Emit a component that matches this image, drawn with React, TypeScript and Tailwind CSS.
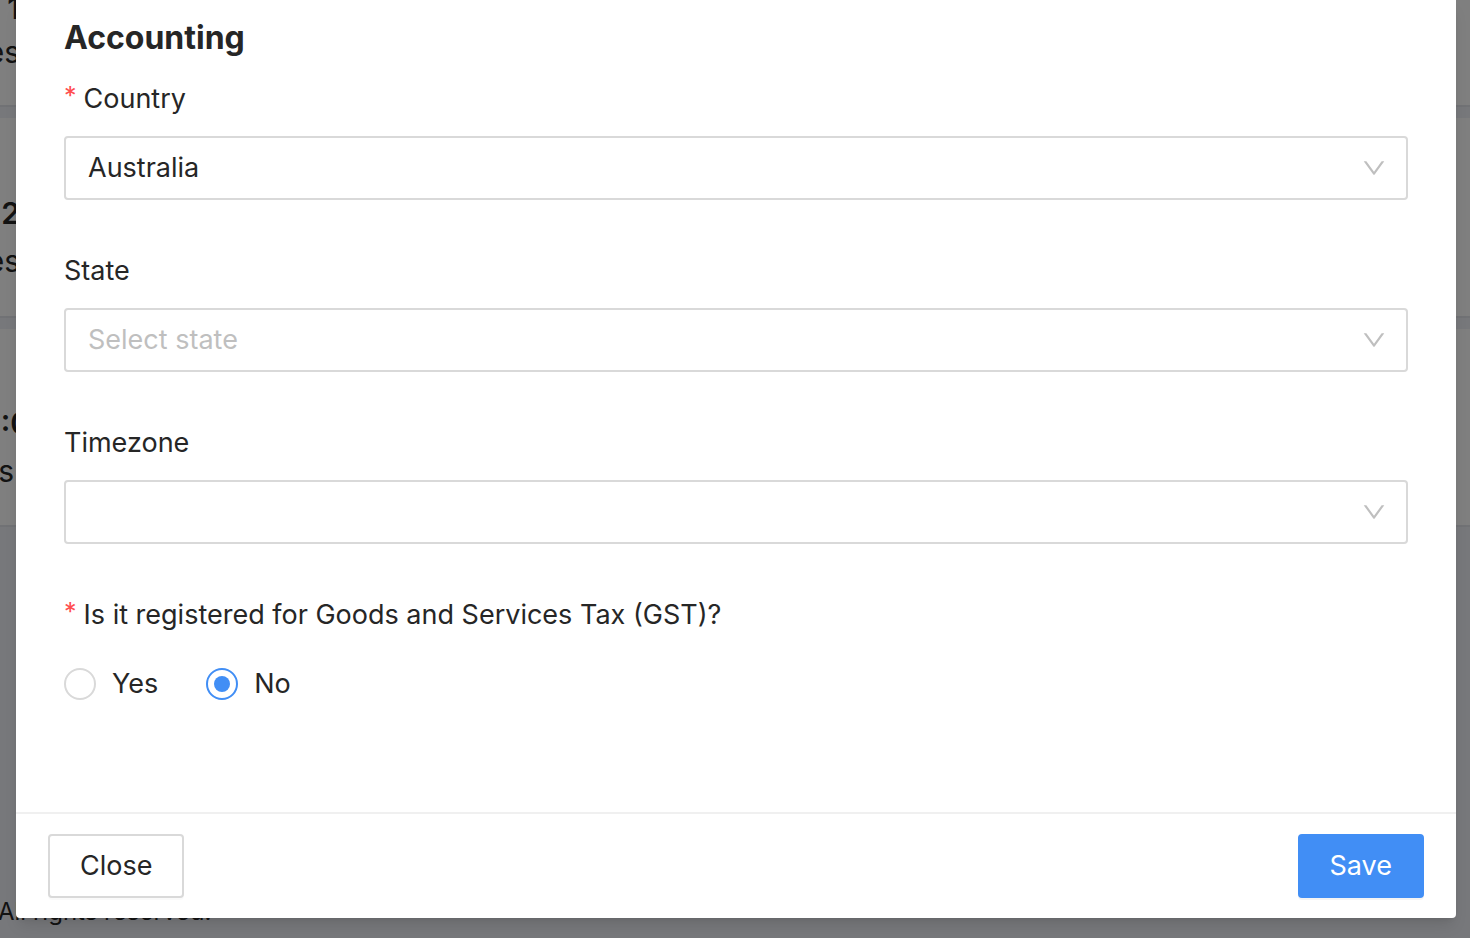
import React from 'react';

const font = { fontFamily: 'Inter, "Noto Sans", sans-serif' };

const Chevron: React.FC = () => (
  <svg viewBox="64 64 896 896" width="24" height="24" fill="#bfbfbf" aria-hidden>
    <path d="M884 256h-75c-5.1 0-9.9 2.5-12.9 6.6L512 654.2 227.9 262.6c-3-4.1-7.8-6.6-12.9-6.6h-75c-6.5 0-10.3 7.4-6.5 12.2l352.6 486.1c12.8 17.6 39 17.6 51.7 0l352.6-486.1c3.9-4.8.1-12.2-6.4-12.2z" />
  </svg>
);

const Label: React.FC<{ text: string; required?: boolean }> = ({ text, required }) => (
  <div className="flex items-center h-[44px] mb-[16px] text-[27px] text-[#262626] pt-[2px]">
    {required && <span className="text-[#ff4d4f] text-[25px] mr-[7px] leading-none -mt-[6px]">*</span>}
    <span>{text}</span>
  </div>
);

const SelectBox: React.FC<{ value?: string; placeholder?: string }> = ({ value, placeholder }) => (
  <div className="flex items-center justify-between h-[64px] border-2 border-[#d9d9d9] rounded-[4px] bg-white pl-[22px] pr-[20px]">
    {value ? (
      <span className="text-[27px] text-[#262626] pt-[1px]">{value}</span>
    ) : (
      <span className="text-[27px] text-[#bfbfbf] pt-[1px]">{placeholder}</span>
    )}
    <Chevron />
  </div>
);

const Radio: React.FC<{ label: string; checked?: boolean }> = ({ label, checked }) => (
  <label className="flex items-center h-[64px] cursor-pointer">
    <span
      className={
        checked
          ? 'flex items-center justify-center w-[32px] h-[32px] rounded-full border-2 border-[#418ef5] bg-white'
          : 'flex items-center justify-center w-[32px] h-[32px] rounded-full border-2 border-[#d9d9d9] bg-white'
      }
    >
      {checked && <span className="w-[16px] h-[16px] rounded-full bg-[#418ef5]" />}
    </span>
    <span className="pl-[16px] text-[27px] text-[#262626] pt-[1px]">{label}</span>
  </label>
);

// page sitting behind the modal overlay
const BackgroundPage: React.FC = () => {
  const rows = [
    { h: 'h-[107px]', a: '1', b: 'Invoices', pad: 'pt-[4px]', w: 'w-[20px]', gap: 'mt-[8px]', bMr: 'mr-0' },
    { h: 'h-[200px]', a: 'Week 2', b: 'Invoices', pad: 'pt-[91px]', w: 'w-[20px]', gap: 'mt-[12px]', bMr: 'mr-0' },
    { h: 'h-[198px]', a: '10:0', b: 'Hours', pad: 'pt-[90px]', w: 'w-[30px]', gap: 'mt-[12px]', bMr: 'mr-[16px]' },
  ];
  return (
    <div className="flex flex-col gap-[11px] bg-[#eef0f6] h-full">
      {rows.map((r, i) => (
        <div key={i} className={`${r.h} bg-white border-b-2 border-[#e3e5ea] flex flex-col`}>
          <div className={`${r.pad} ${r.w} overflow-hidden flex flex-col items-end`}>
            <div className="text-[30px] font-semibold text-[#262626] whitespace-nowrap leading-[36px] -mt-[14px]">{r.a}</div>
            <div className={`${r.gap} ${r.bMr} text-[30px] text-[#262626] whitespace-nowrap leading-[36px]`}>{r.b}</div>
          </div>
        </div>
      ))}
      <div className="flex-1" />
      <div className="text-[24px] text-[#262626] whitespace-nowrap pb-[8px] -ml-[2px]">All rights reserved.</div>
    </div>
  );
};

const App: React.FC = () => {
  return (
    <div className="relative w-full h-[938px] overflow-hidden" style={font}>
      <BackgroundPage />
      <div className="absolute inset-0 bg-black/50" />

      <div className="absolute top-0 left-[16px] w-[1440px] bg-white rounded-b-[4px] shadow-lg">
        <div className="px-[48px] pt-[14px] pb-[48px]">
          <h2 className="text-[32px] leading-[48px] font-bold text-[#262626] mb-[14px]">Accounting</h2>

          <div className="mb-[48px]">
            <Label text="Country" required />
            <SelectBox value="Australia" />
          </div>

          <div className="mb-[48px]">
            <Label text="State" />
            <SelectBox placeholder="Select state" />
          </div>

          <div className="mb-[48px]">
            <Label text="Timezone" />
            <SelectBox />
          </div>

          <div className="mb-[48px]">
            <Label text="Is it registered for Goods and Services Tax (GST)?" required />
            <div className="flex items-center gap-[48px]">
              <Radio label="Yes" />
              <Radio label="No" checked />
            </div>
          </div>
        </div>

        <div className="flex items-center justify-between border-t-2 border-[#f0f0f0] px-[32px] py-[20px]">
          <button className="h-[64px] px-[30px] border-2 border-[#d9d9d9] rounded-[4px] bg-white text-[27px] text-[#262626] shadow-[0_2px_0_rgba(0,0,0,0.02)]">
            Close
          </button>
          <button className="h-[64px] px-[30px] border-2 border-[#418ef5] rounded-[4px] bg-[#418ef5] text-[27px] text-white shadow-[0_2px_0_rgba(0,0,0,0.045)]">
            Save
          </button>
        </div>
      </div>
    </div>
  );
};

export default App;
